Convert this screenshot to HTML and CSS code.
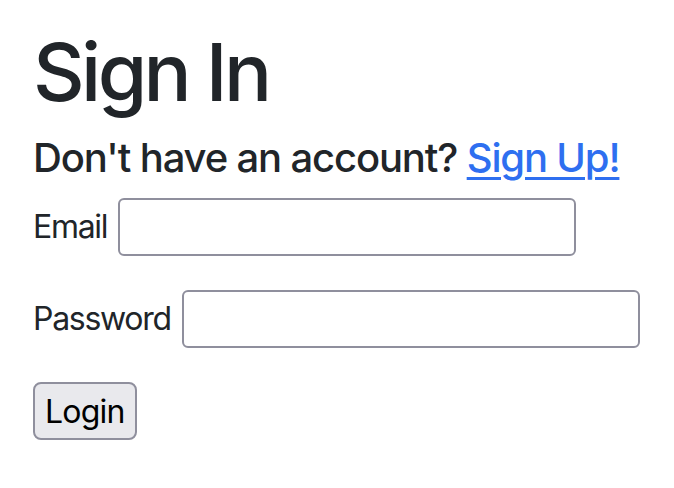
FILE: index.html
```html
<!DOCTYPE html>
<html lang="en">
<head>
<meta charset="utf-8">
<title>Sign In</title>
<link rel="stylesheet" href="styles.css">
</head>
<body>
<main class="page">
  <h1 class="title">Sign In</h1>
  <h5 class="subtitle">Don't have an account? <a href="#" class="link">Sign Up!</a></h5>
  <form class="form">
    <div class="field">
      <label class="label" for="email">Email</label>
      <input class="input" id="email" type="text">
    </div>
    <div class="field">
      <label class="label" for="password">Password</label>
      <input class="input" id="password" type="password">
    </div>
    <button class="button" type="button">Login</button>
  </form>
</main>
</body>
</html>
```
FILE: styles.css
```css
html, body {
  margin: 0;
  padding: 0;
  background: #fff;
}
body {
  font-family: Inter, "Noto Sans", sans-serif;
  color: #212529;
}
.page {
  padding: 24px 0 0 33px;
}
.title {
  margin: 0;
  font-size: 80px;
  font-weight: 500;
  line-height: 96px;
  letter-spacing: -3.6px;
}
.subtitle {
  margin: 14px 0 0 0;
  font-size: 40px;
  font-weight: 500;
  line-height: 48px;
  letter-spacing: -1.15px;
}
.link {
  color: #2e6ff0;
  text-decoration: underline;
  text-decoration-thickness: 3px;
  text-underline-offset: 5px;
}
.form {
  margin-top: 16px;
  display: flex;
  flex-direction: column;
  align-items: flex-start;
  gap: 34px;
}
.field {
  display: flex;
  align-items: center;
  gap: 11px;
}
.label {
  font-size: 32px;
  line-height: 40px;
  letter-spacing: -1.3px;
}
.input {
  box-sizing: border-box;
  width: 458px;
  height: 58px;
  margin: 0;
  border: 2px solid #8f8f9d;
  border-radius: 6px;
  background: #fff;
  font-size: 32px;
}
.button {
  box-sizing: border-box;
  height: 58px;
  padding: 0 10px;
  margin: 0;
  border: 2px solid #8f8f9d;
  border-radius: 8px;
  background: #e9e9ed;
  color: #000;
  font-family: Inter, "Noto Sans", sans-serif;
  font-size: 32px;
  letter-spacing: -0.8px;
}
```
